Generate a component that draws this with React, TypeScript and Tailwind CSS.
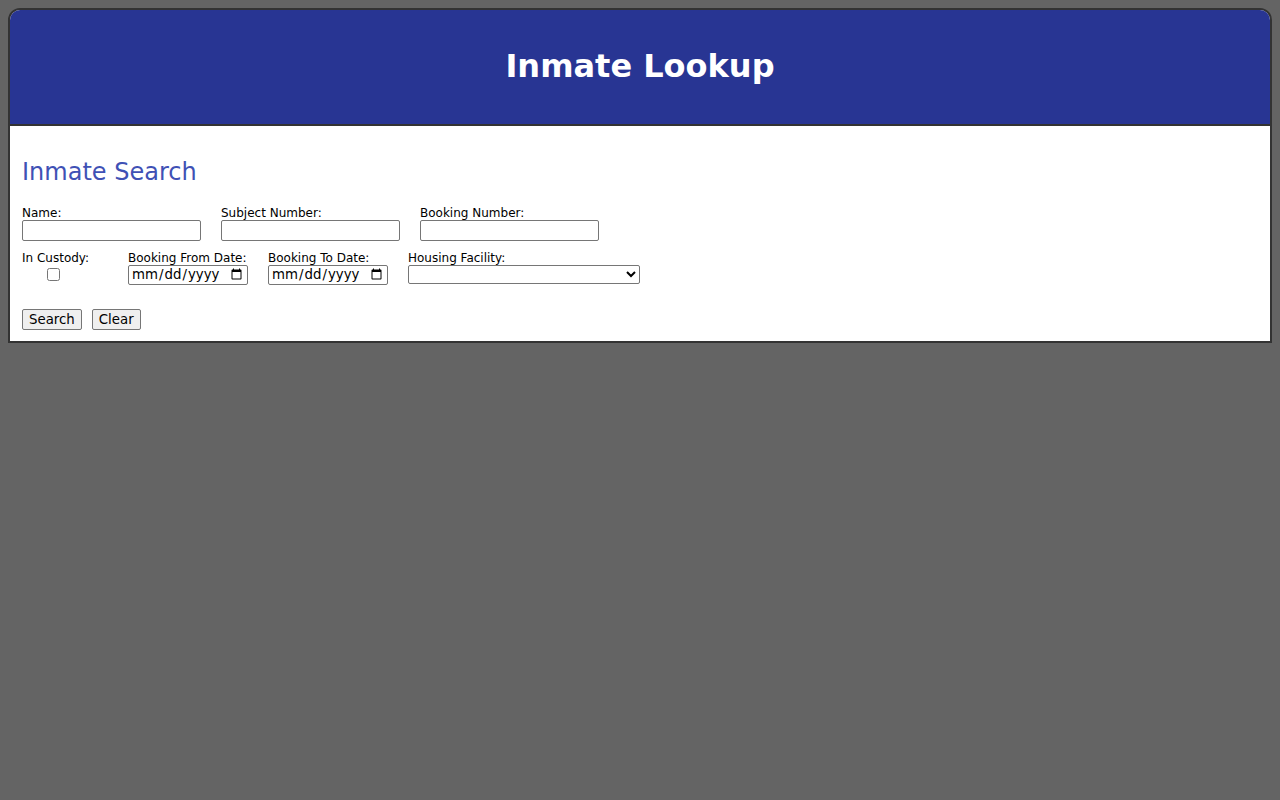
export default function App() {
  const font = "font-['DejaVu_Sans',sans-serif]";
  const inputCls = `block h-[21px] w-[179px] border border-[#767676] rounded-[2px] bg-white px-[2px] text-[13.33px] text-black ${font}`;
  const dateCls = `block h-[20px] w-[120px] border border-[#767676] rounded-[2px] bg-white px-[2px] text-[13.33px] text-black ${font}`;
  const btnCls = `h-[21px] border border-[#767676] rounded-[2px] bg-[#efefef] px-[6px] text-[13.33px] leading-none text-black ${font}`;

  return (
    <div className="min-h-screen bg-[#646464] p-2 font-['DejaVu_Sans',sans-serif] text-black">
      <div className="rounded-t-xl border-2 border-[#333] bg-white">
        <div className="rounded-t-[10px] border-b-2 border-[#333] bg-[#283593] pt-[38px] pb-[39px]">
          <h1 className="text-center text-[32px] font-bold leading-[37px] text-white">Inmate Lookup</h1>
        </div>

        <div className="px-3 pt-[32px] pb-[11px]">
          <h2 className="mb-[20px] text-[24px] leading-[28px] text-[#3f51b5]">Inmate Search</h2>

          <div className="flex gap-5 text-[12px] leading-[14px]">
            <label className="block">
              Name:
              <input type="text" className={inputCls} />
            </label>
            <label className="block">
              Subject Number:
              <input type="text" className={inputCls} />
            </label>
            <label className="block">
              Booking Number:
              <input type="text" className={inputCls} />
            </label>
          </div>

          <div className="mt-[10px] flex gap-5 text-[12px] leading-[14px]">
            <label className="block w-[86px]">
              In Custody:
              <input type="checkbox" className="mt-[3px] ml-[25px] block h-[13px] w-[13px]" />
            </label>
            <label className="block">
              Booking From Date:
              <input type="date" className={dateCls} />
            </label>
            <label className="block">
              Booking To Date:
              <input type="date" className={dateCls} />
            </label>
            <label className="block">
              Housing Facility:
              <select className={`block h-[19px] w-[232px] border border-[#767676] rounded-[2px] bg-white text-[13.33px] text-black ${font}`}>
                <option value=""></option>
              </select>
            </label>
          </div>

          <div className="mt-[24px] flex gap-[10px]">
            <button type="button" className={btnCls}>Search</button>
            <button type="button" className={btnCls}>Clear</button>
          </div>
        </div>
      </div>
    </div>
  );
}
